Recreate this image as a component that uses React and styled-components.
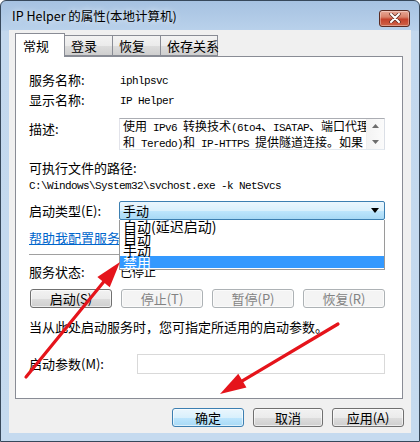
import React from "react";
import styled, { createGlobalStyle } from "styled-components";

const Global = createGlobalStyle`
  html, body {
    margin: 0;
    padding: 0;
    background: #ffffff;
  }
  body {
    font-family: "Noto Sans CJK SC", "Liberation Sans", sans-serif;
    font-size: 12px;
    color: #000;
  }
`;

const Window = styled.div`
  position: relative;
  width: 420px;
  height: 442px;
  box-sizing: border-box;
  border: 1px solid #37485b;
  border-radius: 6px 6px 0 0;
  background: linear-gradient(#a6c2e1 0, #b9d1eb 29px, #c3d8ee 30px, #c5daef 100%);
  display: flex;
  flex-direction: column;
  padding: 0 8px 8px 8px;
  overflow: hidden;
`;

const TitleBar = styled.div`
  height: 29px;
  display: flex;
  align-items: center;
  justify-content: space-between;
  padding: 0 1px 0 3px;
`;

const Title = styled.div`
  font-size: 12.5px;
  line-height: 1;
  margin-top: 2px;
  text-shadow: 0 0 6px rgba(255, 255, 255, 0.9);
`;

const Close = styled.div`
  width: 31px;
  height: 17px;
  box-sizing: border-box;
  margin-top: 5px;
  border: 1px solid #5a2b22;
  border-radius: 3px;
  background: linear-gradient(#e7a796 0, #d9826b 40%, #c4422c 55%, #cf6448 100%);
  box-shadow: inset 0 0 0 1px rgba(255, 255, 255, 0.35);
  display: flex;
  align-items: center;
  justify-content: center;
`;

const Client = styled.div`
  flex: 1;
  background: #f0f0f0;
  display: flex;
  flex-direction: column;
  padding: 3px 8px 6px 6px;
`;

const TabRow = styled.div`
  display: flex;
  align-items: flex-end;
  height: 23px;
`;

const Tab = styled.div`
  box-sizing: border-box;
  width: ${(p) => p.$w}px;
  height: ${(p) => (p.$active ? 24 : 21)}px;
  margin-bottom: ${(p) => (p.$active ? -1 : 0)}px;
  position: relative;
  z-index: ${(p) => (p.$active ? 1 : 0)};
  padding-left: ${(p) => (p.$active ? 7 : 6)}px;
  border: 1px solid #898c95;
  border-bottom: ${(p) => (p.$active ? "none" : "1px solid #898c95")};
  border-left: ${(p) => (p.$first || p.$active ? "1px solid #898c95" : "none")};
  background: ${(p) =>
    p.$active ? "#ffffff" : "linear-gradient(#f3f3f3 0, #ebebeb 50%, #dddddd 51%, #cfcfcf 100%)"};
  font-size: 13px;
  line-height: ${(p) => (p.$active ? 24 : 20)}px;
  white-space: nowrap;
`;

const Panel = styled.div`
  flex: 1;
  background: #ffffff;
  border: 1px solid #898c95;
  padding: 13px 17px 0 13px;
  display: flex;
  flex-direction: column;
`;

const Field = styled.div`
  display: grid;
  grid-template-columns: ${(p) => p.$label || 90}px 1fr;
  align-items: ${(p) => (p.$top ? "start" : "center")};
  min-height: ${(p) => p.$h || 16}px;
  margin-top: ${(p) => p.$mt || 0}px;
  position: relative;
`;

const Label = styled.div`
  font-size: 13px;
  line-height: 16px;
  padding-top: ${(p) => p.$pt || 0}px;
  white-space: nowrap;
`;

const Line = styled.div`
  font-size: 13px;
  line-height: 16px;
  margin-top: ${(p) => p.$mt || 0}px;
  white-space: nowrap;
`;

const Mono = styled.span`
  font-family: "Liberation Mono", monospace;
  font-size: 11px;
  letter-spacing: -0.6px;
  white-space: pre;
`;

const Value = styled.div`
  padding-left: 1px;
  font-size: 12px;
  line-height: 16px;
  white-space: nowrap;
`;

const TextBox = styled.div`
  height: 32px;
  box-sizing: border-box;
  border: 1px solid #abadb3;
  border-left-color: #e2e3ea;
  border-right-color: #dbdfe6;
  border-bottom-color: #e3e9ef;
  display: flex;
  overflow: hidden;
`;

const TextBody = styled.div`
  flex: 1;
  padding: 0 0 0 3px;
  font-size: 12px;
  line-height: 13px;
  white-space: nowrap;
  overflow: hidden;
`;

const ScrollBar = styled.div`
  width: 17px;
  background: linear-gradient(90deg, #f3f3f3, #fbfbfb);
  border-left: 1px solid #efefef;
  display: flex;
  flex-direction: column;
  justify-content: space-between;
  align-items: center;
  padding: 5px 0 5px;
`;

const Combo = styled.div`
  height: 19px;
  box-sizing: border-box;
  border: 1px solid #3c7fb1;
  border-radius: 2px;
  background: linear-gradient(#eaf6fd 0, #d9f0fc 50%, #bee6fd 51%, #a7d9f5 100%);
  display: flex;
  align-items: center;
  justify-content: space-between;
  padding: 0 5px 0 3px;
  font-size: 13px;
  position: relative;
`;

const DropList = styled.div`
  position: absolute;
  left: -1px;
  right: -1px;
  top: 18px;
  background: #ffffff;
  border: 1px solid #9a9a9a;
  border-top: none;
  padding-bottom: 1px;
  z-index: 2;
`;

const Option = styled.div`
  height: 12px;
  line-height: 12px;
  font-size: 14px;
  padding-left: 3px;
  background: ${(p) => (p.$selected ? "#3399ff" : "transparent")};
  color: ${(p) => (p.$selected ? "#ffffff" : "#000")};
  white-space: nowrap;
`;

const Link = styled.div`
  font-size: 13px;
  line-height: 16px;
  color: #0066cc;
  text-decoration: underline;
  margin-top: 10px;
  white-space: nowrap;
`;

const Separator = styled.div`
  height: 1px;
  background: #a0a0a0;
  border-bottom: 1px solid #ffffff;
  margin-top: 8px;
`;

const ButtonRow = styled.div`
  display: grid;
  grid-template-columns: repeat(4, 1fr);
  column-gap: 9px;
  margin-top: 9px;
  padding-left: 1px;
`;

const Button = styled.div`
  box-sizing: border-box;
  height: 19px;
  width: ${(p) => (p.$w ? `${p.$w}px` : "auto")};
  border: 1px solid ${(p) => (p.$disabled ? "#adb2b5" : p.$default ? "#3c7fb1" : "#707070")};
  border-radius: 3px;
  background: ${(p) =>
    p.$disabled
      ? "#f4f4f4"
      : p.$default
      ? "linear-gradient(#eaf6fd 0, #d9f0fc 50%, #bee6fd 51%, #a7d9f5 100%)"
      : "linear-gradient(#f2f2f2 0, #ebebeb 50%, #dddddd 51%, #cfcfcf 100%)"};
  box-shadow: inset 0 0 0 1px rgba(255, 255, 255, 0.6);
  color: ${(p) => (p.$disabled ? "#838383" : "#000")};
  font-size: 13px;
  line-height: 17px;
  text-align: center;
  white-space: nowrap;
`;

const Input = styled.div`
  height: 20px;
  box-sizing: border-box;
  border: 1px solid #d9d9d9;
  background: #ffffff;
`;

const Footer = styled.div`
  display: flex;
  justify-content: flex-end;
  gap: 9px;
  margin-top: 9px;
  margin-right: -1px;
`;

const Overlay = styled.svg`
  position: absolute;
  left: 0;
  top: 0;
  pointer-events: none;
  z-index: 5;
`;

function Arrow({ tail, tip, head = 26, half = 8 }) {
  const dx = tip[0] - tail[0];
  const dy = tip[1] - tail[1];
  const len = Math.hypot(dx, dy);
  const ux = dx / len;
  const uy = dy / len;
  const bx = tip[0] - ux * head;
  const by = tip[1] - uy * head;
  const px = -uy * half;
  const py = ux * half;
  return (
    <g>
      <line x1={tail[0]} y1={tail[1]} x2={bx + ux * 2} y2={by + uy * 2} stroke="#e5141b" strokeWidth="3.2" strokeLinecap="round" />
      <polygon points={`${tip[0]},${tip[1]} ${bx + px},${by + py} ${bx - px},${by - py}`} fill="#e5141b" />
    </g>
  );
}

export default function App() {
  return (
    <>
      <Global />
      <Window>
        <TitleBar>
          <Title>IP Helper 的属性(本地计算机)</Title>
          <Close>
            <svg width="12" height="10" viewBox="0 0 12 10">
              <path d="M2 1 L10 9 M10 1 L2 9" stroke="#5a2b22" strokeWidth="3.4" strokeLinecap="round" />
              <path d="M2 1 L10 9 M10 1 L2 9" stroke="#ffffff" strokeWidth="2" strokeLinecap="round" />
            </svg>
          </Close>
        </TitleBar>
        <Client>
          <TabRow>
            <Tab $active $w={50}>常规</Tab>
            <Tab $w={48}>登录</Tab>
            <Tab $w={48}>恢复</Tab>
            <Tab $w={57}>依存关系</Tab>
          </TabRow>
          <Panel>
            <Field $h={20}>
              <Label>服务名称:</Label>
              <Value><Mono>iphlpsvc</Mono></Value>
            </Field>
            <Field $h={20}>
              <Label>显示名称:</Label>
              <Value><Mono>IP Helper</Mono></Value>
            </Field>
            <Field $top $mt={8}>
              <Label $pt={3}>描述:</Label>
              <TextBox>
                <TextBody>
                  <div>使用<Mono> IPv6 </Mono>转换技术<Mono>(6to4</Mono>、<Mono>ISATAP</Mono>、端口代理</div>
                  <div>和<Mono> Teredo)</Mono>和<Mono> IP-HTTPS </Mono>提供隧道连接。如果</div>
                </TextBody>
                <ScrollBar>
                  <svg width="7" height="4" viewBox="0 0 7 4"><path d="M0 4 L3.5 0 L7 4Z" fill="#6d6d6d" /></svg>
                  <svg width="7" height="4" viewBox="0 0 7 4"><path d="M0 0 L3.5 4 L7 0Z" fill="#6d6d6d" /></svg>
                </ScrollBar>
              </TextBox>
            </Field>
            <Line $mt={10}>可执行文件的路径:</Line>
            <Line><Mono>C:\Windows\System32\svchost.exe -k NetSvcs</Mono></Line>
            <Field $mt={7} $h={19}>
              <Label>启动类型(E):</Label>
              <Combo>
                <span>手动</span>
                <svg width="8" height="5" viewBox="0 0 8 5"><path d="M0 0 L4 5 L8 0Z" fill="#000" /></svg>
                <DropList>
                  <Option>自动(延迟启动)</Option>
                  <Option>自动</Option>
                  <Option>手动</Option>
                  <Option $selected>禁用</Option>
                </DropList>
              </Combo>
            </Field>
            <Link>帮助我配置服务启动选项。</Link>
            <Separator />
            <Field $mt={8}>
              <Label>服务状态:</Label>
              <Value>已停止</Value>
            </Field>
            <ButtonRow>
              <Button>启动(S)</Button>
              <Button $disabled>停止(T)</Button>
              <Button $disabled>暂停(P)</Button>
              <Button $disabled>恢复(R)</Button>
            </ButtonRow>
            <Line $mt={11}>当从此处启动服务时，您可指定所适用的启动参数。</Line>
            <Field $label={108} $mt={19} $h={20}>
              <Label>启动参数(M):</Label>
              <Input />
            </Field>
          </Panel>
          <Footer>
            <Button $default $w={72}>确定</Button>
            <Button $w={70}>取消</Button>
            <Button $w={72}>应用(A)</Button>
          </Footer>
        </Client>
        <Overlay width="420" height="442" viewBox="0 0 420 442">
          <Arrow tail={[25, 376]} tip={[119, 261]} />
          <Arrow tail={[337, 323]} tip={[219, 393]} />
        </Overlay>
      </Window>
    </>
  );
}
